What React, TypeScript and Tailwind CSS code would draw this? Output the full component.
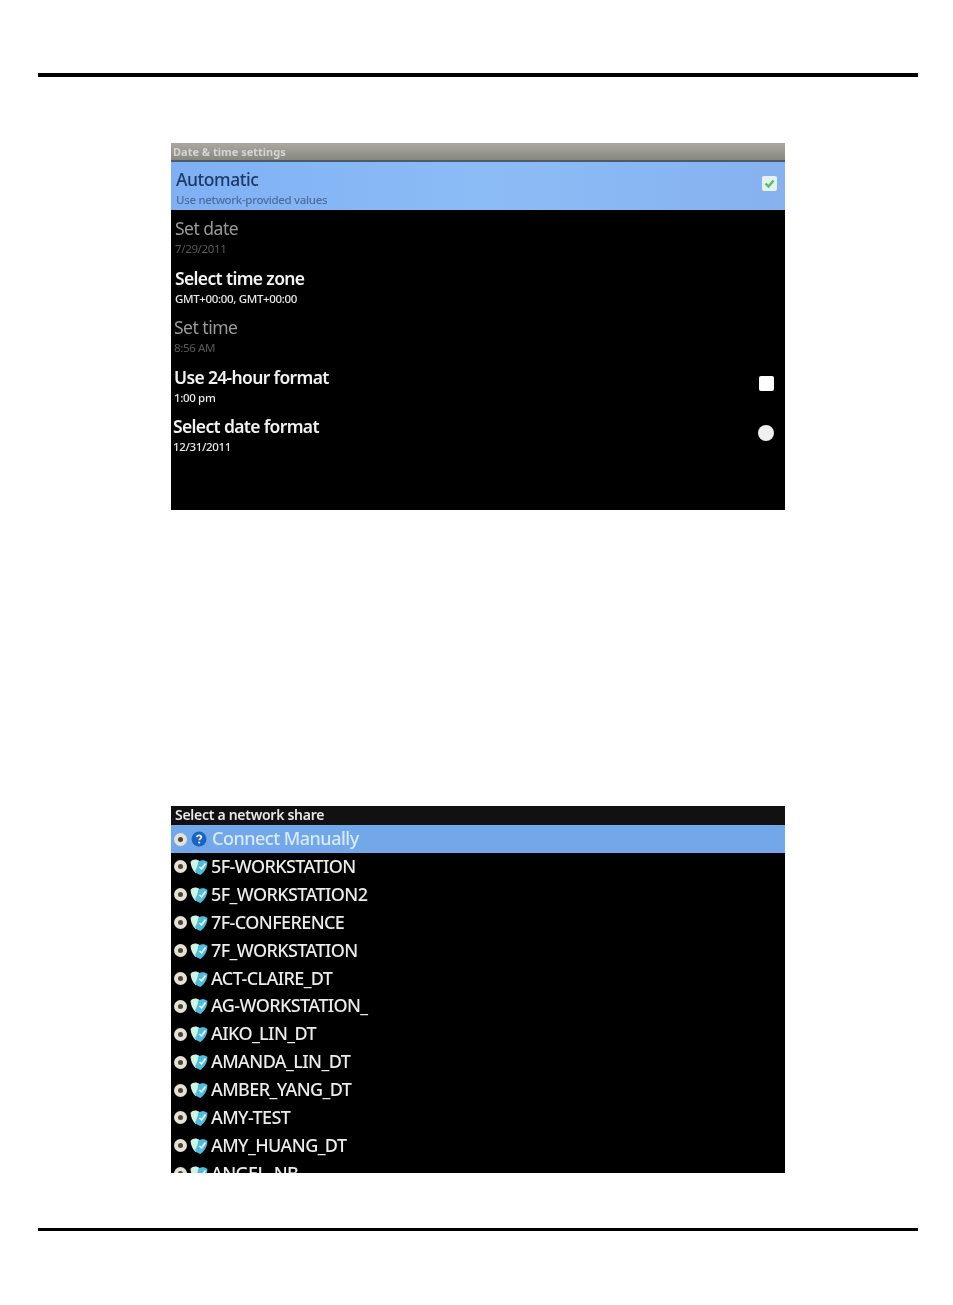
const F = '[font-family:"Noto_Sans",sans-serif]';

function Shield({ help }: { help?: boolean }) {
  if (help) {
    return (
      <svg width="16" height="16" viewBox="0 0 16 16" className="shrink-0">
        <circle cx="8" cy="8" r="7.500" fill="#1a63c4" />
        <path d="M5.800 6.200C6 4.800 7 4.300 8.100 4.300c1.300 0 2.200.8 2.200 1.800 0 1.500-2 1.600-2 3.200" fill="none" stroke="#e8f2ff" strokeWidth="1.800" />
        <circle cx="8.200" cy="11.600" r="1.100" fill="#e8f2ff" />
      </svg>
    );
  }
  return (
    <svg width="18" height="18" viewBox="0 0 18 18" className="shrink-0">
      <path d="M.5 4C3 .8 6.500 1 9.500 3c-.3 5-1.500 9-3.500 12.500C3 13 .8 8.500.5 4Z" fill="#d0f4e2" />
      <path d="M8 4c3-2.300 6.500-2.500 9.500 0-.3 5.500-2.800 10-7 13C7.500 16 5.800 14.500 5 13 7 10 8 7 8 4Z" fill="#4fbcdf" />
      <path d="M9.500 9l2 2 4-5.500" fill="none" stroke="#eafcff" strokeWidth="1.600" />
    </svg>
  );
}

function Radio() {
  return (
    <span className="w-[13px] h-[13px] rounded-full bg-[#e4e2d8] flex items-center justify-center shrink-0">
      <span className="w-[5px] h-[5px] rounded-full bg-[#4a4630]" />
    </span>
  );
}

function Setting({ title, sub, dim, ctl, ml }: { title: string; sub: string; dim?: boolean; ctl?: React.ReactNode; ml: string }) {
  return (
    <div className={`h-[49.500px] flex items-center justify-between pr-[11px] ${ml}`}>
      <div className="flex flex-col pt-[3px]">
        <span className={`text-[17.500px] leading-[26px] ${dim ? "text-[#9a9a9a] font-normal tracking-[-0.500px]" : "text-[#f2f2f2] font-semibold tracking-[-0.650px]"}`}>{title}</span>
        <span className={`text-[11.500px] leading-[16px] tracking-[-0.350px] ${dim ? "text-[#5a5a5a]" : "text-[#e8e8e8] font-medium"}`}>{sub}</span>
      </div>
      {ctl}
    </div>
  );
}

const shares = [
  "5F-WORKSTATION", "5F_WORKSTATION2", "7F-CONFERENCE", "7F_WORKSTATION", "ACT-CLAIRE_DT",
  "AG-WORKSTATION_", "AIKO_LIN_DT", "AMANDA_LIN_DT", "AMBER_YANG_DT", "AMY-TEST", "AMY_HUANG_DT", "ANGEL_NB",
];

export default function App() {
  return (
    <div className={`w-[953px] h-[1305px] bg-white overflow-hidden pt-[73px] ${F}`}>
      <div className="ml-[38px] w-[880px] h-1 bg-black" />

      <div className="ml-[171px] mt-[66px] w-[614px] h-[367px] bg-black overflow-hidden flex flex-col blur-[0.6px]">
        <div className="h-[19px] shrink-0 bg-gradient-to-b from-[#aca89f] to-[#88887f] border-b-2 border-[#4d5a68] text-[11px] leading-[17px] font-bold text-[#d4d4d4] pl-[2px]">
          Date &amp; time settings
        </div>
        <div className="h-[48px] shrink-0 bg-gradient-to-r from-[#7fb0f4] via-[#8cbcf6] to-[#86b2f0] flex items-center justify-between pl-[5px] pr-[8px]">
          <div className="flex flex-col">
            <span className="text-[17.500px] leading-[26px] tracking-[-0.450px] text-[#1c3a66] font-medium">Automatic</span>
            <span className="text-[11.500px] leading-[15px] tracking-[-0.320px] text-[#4a6d9c] font-medium">Use network-provided values</span>
          </div>
          <span className="w-[15px] h-[15px] mb-[5px] rounded-[2px] bg-[#e6f2ee] flex items-center justify-center">
            <svg width="11" height="11" viewBox="0 0 11 11">
              <path d="M1.500 5.500 4.500 8.500 9.500 2.500" fill="none" stroke="#4cc46a" strokeWidth="2.400" />
            </svg>
          </span>
        </div>
        <Setting ml="pl-[4px]" title="Set date" sub="7/29/2011" dim />
        <Setting ml="pl-[4px]" title="Select time zone" sub="GMT+00:00, GMT+00:00" />
        <Setting ml="pl-[3px]" title="Set time" sub="8:56 AM" dim />
        <Setting ml="pl-[3px]" title="Use 24-hour format" sub="1:00 pm" ctl={<span className="w-[15px] h-[15px] rounded-[2px] bg-white" />} />
        <Setting
          ml="pl-[2px]"
          title="Select date format"
          sub="12/31/2011"
          ctl={<span className="w-[16px] h-[16px] rounded-full bg-[#f0f0f0]" />}
        />
      </div>

      <div className="ml-[171px] mt-[296px] w-[614px] h-[367px] bg-black overflow-hidden flex flex-col blur-[0.6px]">
        <div className="h-[19px] shrink-0 bg-[#111111] text-[14px] leading-[18px] font-semibold text-[#e8e8e8] pl-[4px] tracking-[-0.280px]">
          Select a network share
        </div>
        <div className="h-[28px] shrink-0 bg-[#72a8ea] flex items-center gap-[4px] pl-[3px] pr-[3px]">
          <Radio />
          <Shield help />
          <span className="text-[18px] leading-[28px] tracking-[-0.500px] text-[#d8eafc] ml-[1px] mt-[-2px] font-medium">Connect Manually</span>
        </div>
        {shares.map((s) => (
          <div key={s} className="h-[27.900px] shrink-0 flex items-center gap-[3px] pl-[3px]">
            <Radio />
            <Shield />
            <span className="text-[18px] leading-[28px] tracking-[-0.600px] text-[#ececec] mt-[-2px] font-medium">{s}</span>
          </div>
        ))}
      </div>

      <div className="ml-[38px] mt-[55px] w-[880px] h-[3px] bg-black" />
    </div>
  );
}
